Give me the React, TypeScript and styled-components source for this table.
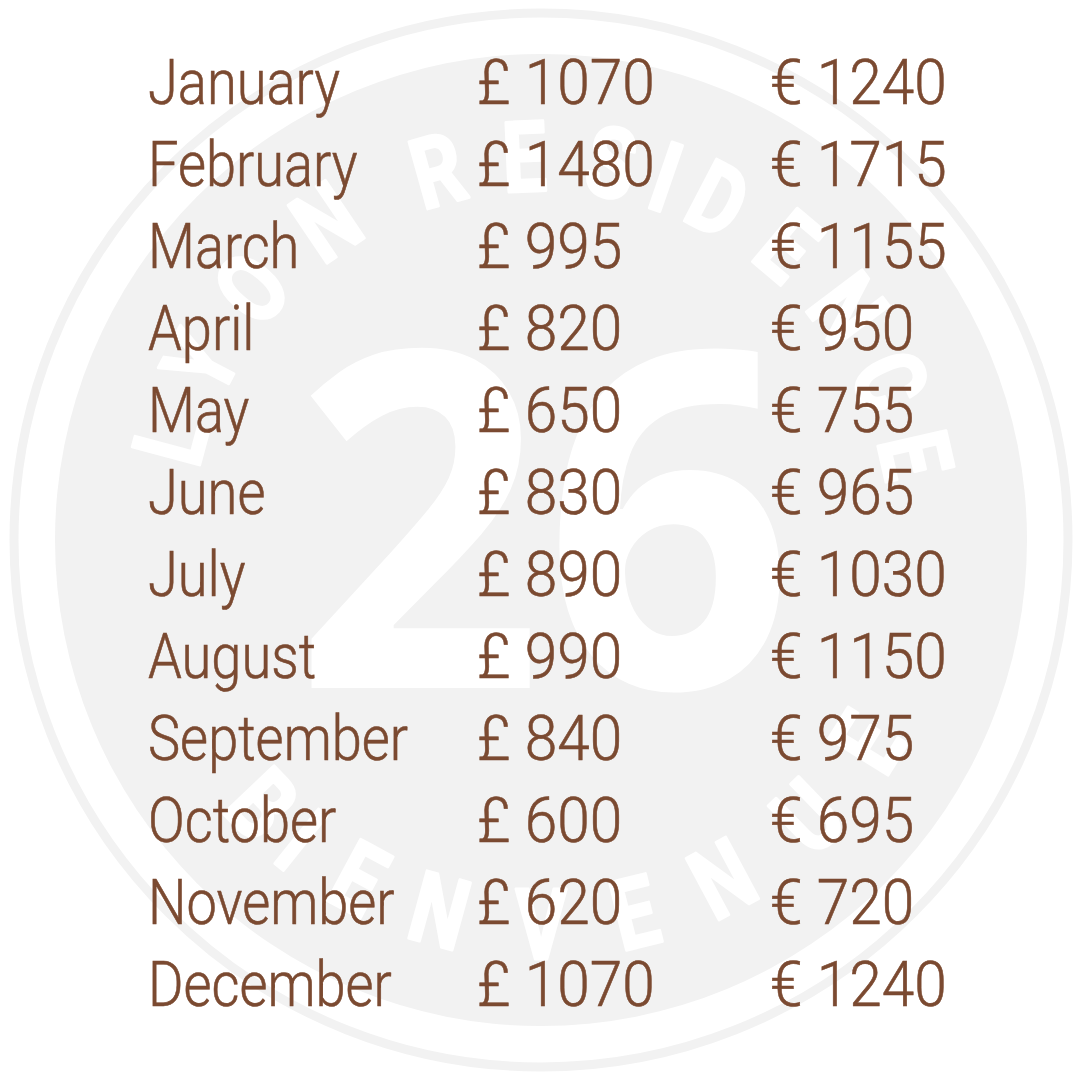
import React from 'react'
import styled, { createGlobalStyle } from 'styled-components'

const GlobalStyle = createGlobalStyle`
  html, body {
    margin: 0;
    padding: 0;
    background: #ffffff;
  }
`

const Page = styled.div`
  display: grid;
  width: 1083px;
  height: 1081px;
  overflow: hidden;
  background: #ffffff;

  > * {
    grid-area: 1 / 1;
  }
`

const Badge = styled.svg`
  display: block;
  width: 1083px;
  height: 1081px;
`

const Table = styled.div`
  display: grid;
  grid-template-columns: 329px 293px auto;
  grid-auto-rows: 82px;
  align-content: start;
  padding: 42px 0 0 148px;
  font-family: Roboto, 'DejaVu Sans Condensed', sans-serif;
  font-weight: 300;
  font-size: 63px;
  line-height: 82px;
  color: #7b4a31;
  -webkit-text-stroke: 0.6px #7b4a31;
`

// the reference face is a narrow one; squeeze Roboto to its width
const Cell = styled.span<{ $squeeze: number }>`
  display: inline-block;
  white-space: nowrap;
  transform: scaleX(${({ $squeeze }) => $squeeze});
  transform-origin: left center;
`

const CX = 541
const CY = 540
const RING = '#f2f2f2'

// letter centres on the arc, angle in degrees (0 = right, -90 = top)
const TOP: [string, number][] = [
  ['L', -165], ['Y', -152.5], ['O', -139], ['N', -124],
  ['R', -105.6], ['E', -92.5], ['S', -79.5], ['I', -71], ['D', -62.5],
  ['E', -50], ['N', -37], ['C', -24.5], ['E', -12.8]
]
const BOTTOM: [string, number][] = [
  ['B', 136.5], ['I', 128.7], ['E', 118.3], ['N', 105.3], ['V', 90],
  ['E', 75.9], ['N', 61.8], ['U', 46], ['E', 31.8]
]

const rows = [
  ['January', 1070, 1240],
  ['February', 1480, 1715],
  ['March', 995, 1155],
  ['April', 820, 950],
  ['May', 650, 755],
  ['June', 830, 965],
  ['July', 890, 1030],
  ['August', 990, 1150],
  ['September', 840, 975],
  ['October', 600, 695],
  ['November', 620, 720],
  ['December', 1070, 1240]
] as const

const ArcLetter = ({ ch, angle, inward }: { ch: string; angle: number; inward?: boolean }) => {
  const r = 384
  const rad = (angle * Math.PI) / 180
  const x = CX + r * Math.cos(rad)
  const y = CY + r * Math.sin(rad)
  const rot = inward ? angle - 90 : angle + 90
  return (
    <text
      transform={`translate(${x.toFixed(1)} ${y.toFixed(1)}) rotate(${rot.toFixed(1)}) scale(0.8 1)`}
      dy="0.355em"
      textAnchor="middle"
    >
      {ch}
    </text>
  )
}

const Watermark = () => (
  <Badge viewBox="0 0 1083 1081">
    <circle cx={CX} cy={CY} r={527} fill="none" stroke={RING} strokeWidth={9} />
    <circle cx={CX} cy={CY} r={486} fill={RING} />
    <g
      fill="#ffffff"
      stroke="#ffffff"
      strokeWidth={3}
      strokeLinejoin="round"
      fontFamily="Roboto, 'Open Sans', sans-serif"
      fontWeight={700}
      fontSize={98}
    >
      {TOP.map(([ch, a], i) => (
        <ArcLetter key={`t${i}`} ch={ch} angle={a} />
      ))}
      {BOTTOM.map(([ch, a], i) => (
        <ArcLetter key={`b${i}`} ch={ch} angle={a} inward />
      ))}
    </g>
    <text
      x={544}
      y={688}
      textAnchor="middle"
      fill="#ffffff"
      fontFamily="'Open Sans', Roboto, sans-serif"
      fontWeight={700}
      fontSize={470}
      textLength={500}
      lengthAdjust="spacingAndGlyphs"
    >
      26
    </text>
  </Badge>
)

export default function App() {
  return (
    <>
      <GlobalStyle />
      <Page>
        <Watermark />
        <Table>
          {rows.map(([month, gbp, eur]) => (
            <React.Fragment key={month}>
              <div><Cell $squeeze={0.86}>{month}</Cell></div>
              <div><Cell $squeeze={0.93}>£ {gbp}</Cell></div>
              <div><Cell $squeeze={0.93}>€ {eur}</Cell></div>
            </React.Fragment>
          ))}
        </Table>
      </Page>
    </>
  )
}
